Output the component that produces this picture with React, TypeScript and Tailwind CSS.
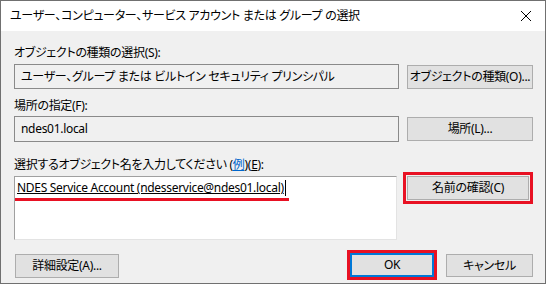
import React from "react";

const font = {
  fontFamily: '"Noto Sans", "Noto Sans CJK JP", sans-serif',
  fontFeatureSettings: '"palt"',
};

function Btn({ children, className = "" }: { children: React.ReactNode; className?: string }) {
  return (
    <div
      className={`flex items-center justify-center whitespace-nowrap bg-[#e1e1e1] border border-[#adadad] text-[12px] text-black ${className}`}
    >
      {children}
    </div>
  );
}

export default function App() {
  return (
    <div className="w-[547px] h-[285px] bg-white tracking-[-0.3px]" style={font}>
      <div className="w-[546px] h-[284px] border border-[#707070] flex flex-col bg-[#f0f0f0]">
        {/* title bar */}
        <div className="h-[30px] bg-white flex items-center pl-[9px] pr-[12px] shrink-0">
          <div className="text-[12px] text-black flex-1 leading-none whitespace-nowrap">
            ユーザー、コンピューター、サービス アカウント または グループ の選択
          </div>
          <svg width="12" height="12" viewBox="0 0 12 12" className="mr-[1px]">
            <path d="M1 1 L11 11 M11 1 L1 11" stroke="#000" strokeWidth="1" />
          </svg>
        </div>

        <div className="flex flex-col pl-[13px] pr-[12px] pt-[14px]">
          <div className="text-[12px] leading-[16px] h-[16px]">オブジェクトの種類の選択(S):</div>
          <div className="flex items-center mt-[3px] h-[25px]">
            <div className="w-[385px] h-[25px] border border-[#8a8a8a] bg-[#f0f0f0] flex items-center pl-[6px] text-[12px] whitespace-nowrap">
              ユーザー、グループ または ビルトイン セキュリティ プリンシパル
            </div>
            <Btn className="ml-[8px] w-[126px] h-[24px]">オブジェクトの種類(O)...</Btn>
          </div>

          <div className="text-[12px] leading-[16px] h-[16px] mt-[9px]">場所の指定(F):</div>
          <div className="flex items-center mt-[2px] h-[26px]">
            <div className="w-[385px] h-[26px] border border-[#8a8a8a] bg-[#f0f0f0] flex items-center pl-[6px] text-[12px]">
              ndes01.local
            </div>
            <Btn className="ml-[8px] w-[126px] h-[24px]">場所(L)...</Btn>
          </div>

          <div className="text-[12px] leading-[16px] h-[16px] mt-[15px] whitespace-nowrap">
            選択するオブジェクト名を入力してください (<span className="text-[#0066cc] underline">例</span>)(<span className="underline">E</span>):
          </div>
          <div className="flex items-start mt-[3px]">
            <div className="w-[385px] h-[64px] bg-white border border-[#a0a0a0] border-r-[#e3e3e3] border-b-[#e3e3e3] flex flex-col pt-[3px]">
              <div className="flex items-center pl-[2px] h-[16px]">
                <span className="text-[12px] leading-[16px] underline text-black whitespace-nowrap tracking-[-0.3px]">
                  NDES Service Account (ndesservice@ndes01.local)
                </span>
                <div className="w-[1px] h-[16px] bg-black ml-[1px]" />
              </div>
              <div className="w-[274px] h-[3px] bg-[#e81123] mt-[2px]" />
            </div>
            <div className="ml-[6px] -mt-[4px] border-[3px] border-[#e81123] p-[1px]">
              <Btn className="w-[122px] h-[24px]">名前の確認(C)</Btn>
            </div>
          </div>

          <div className="flex items-center mt-[11px]">
            <Btn className="ml-[1px] w-[104px] h-[24px]">詳細設定(A)...</Btn>
            <div className="flex-1" />
            <div className="border-[3px] border-[#e81123] -mt-[1px]">
              <div className="w-[84px] h-[24px] bg-[#e1e1e1] border-2 border-[#0078d7] flex items-center justify-center text-[12px]">
                OK
              </div>
            </div>
            <Btn className="ml-[9px] w-[87px] h-[23px] mr-[0px]">キャンセル</Btn>
          </div>
        </div>
      </div>
    </div>
  );
}
